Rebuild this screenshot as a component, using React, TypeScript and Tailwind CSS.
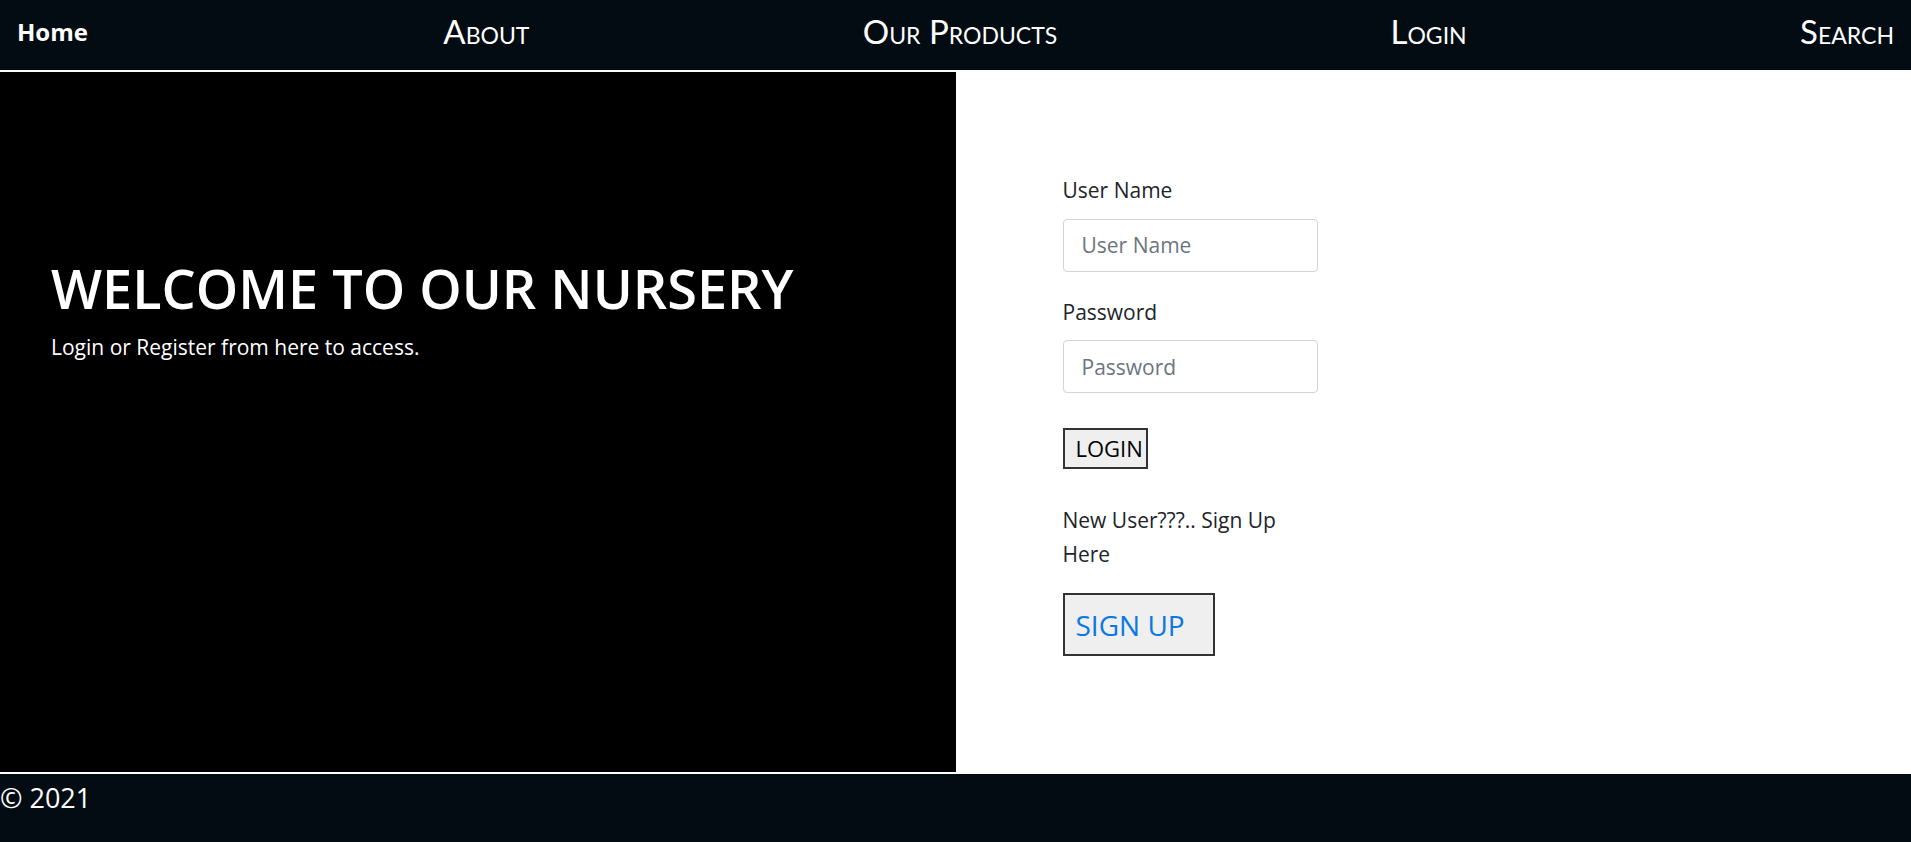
export default function App() {
  const links = ['About', 'Our Products', 'Login', 'Search']

  return (
    <div className="flex min-h-screen flex-col bg-white font-['Open_Sans',sans-serif]">
      {/* Top nav */}
      <nav className="flex h-[70px] items-center justify-between bg-[#030c12] px-[17px] pb-[7px]">
        <a className="mr-[22px] text-[24px] font-bold text-white">Home</a>
        {links.map((l) => (
          <a
            key={l}
            className="font-['Lato',sans-serif] text-[33px] text-white [font-variant:small-caps]"
          >
            {l}
          </a>
        ))}
      </nav>

      <div className="mt-[2px] flex h-[700px]">
        {/* Welcome side */}
        <div className="w-1/2 bg-black pt-[184px] pl-[51px] text-white">
          <h1 className="text-[54px] leading-[1.2] font-semibold">
            WELCOME TO OUR NURSERY
          </h1>
          <p className="mt-[11px] text-[21px]">
            Login or Register from here to access.
          </p>
        </div>

        {/* Login form */}
        <div className="w-1/2 bg-white pt-[103px] pl-[107px] text-[#212529]">
          <form className="flex w-[255px] flex-col">
            <label className="text-[21px] leading-[1.5]">User Name</label>
            <input
              placeholder="User Name"
              className="mt-[12px] h-[53px] rounded-[4px] border border-[#ced4da] px-[18px] text-[21px] placeholder:text-[#6c757d]"
            />
            <label className="mt-[25px] text-[21px] leading-[1.5]">
              Password
            </label>
            <input
              type="password"
              placeholder="Password"
              className="mt-[12px] h-[53px] rounded-[4px] border border-[#ced4da] px-[18px] text-[21px] placeholder:text-[#6c757d]"
            />
            <button
              type="button"
              className="mt-[35px] h-[41px] w-[85px] border-2 border-[#333] bg-[#efefef] text-left pl-[11px] text-[22px] text-black"
            >
              LOGIN
            </button>
            <p className="mt-[34px] text-[21px] leading-[34px]">
              New User???.. Sign Up Here
            </p>
            <button
              type="button"
              className="mt-[22px] h-[63px] w-[152px] border-2 border-[#333] bg-[#efefef] text-left pl-[11px] text-[28px] font-medium text-[#0b78e3]"
            >
              SIGN UP
            </button>
          </form>
        </div>
      </div>

      <footer className="mt-[2px] h-[68px] bg-[#030c12] pt-[4px] text-[27px] text-white">
        © 2021
      </footer>
    </div>
  )
}
